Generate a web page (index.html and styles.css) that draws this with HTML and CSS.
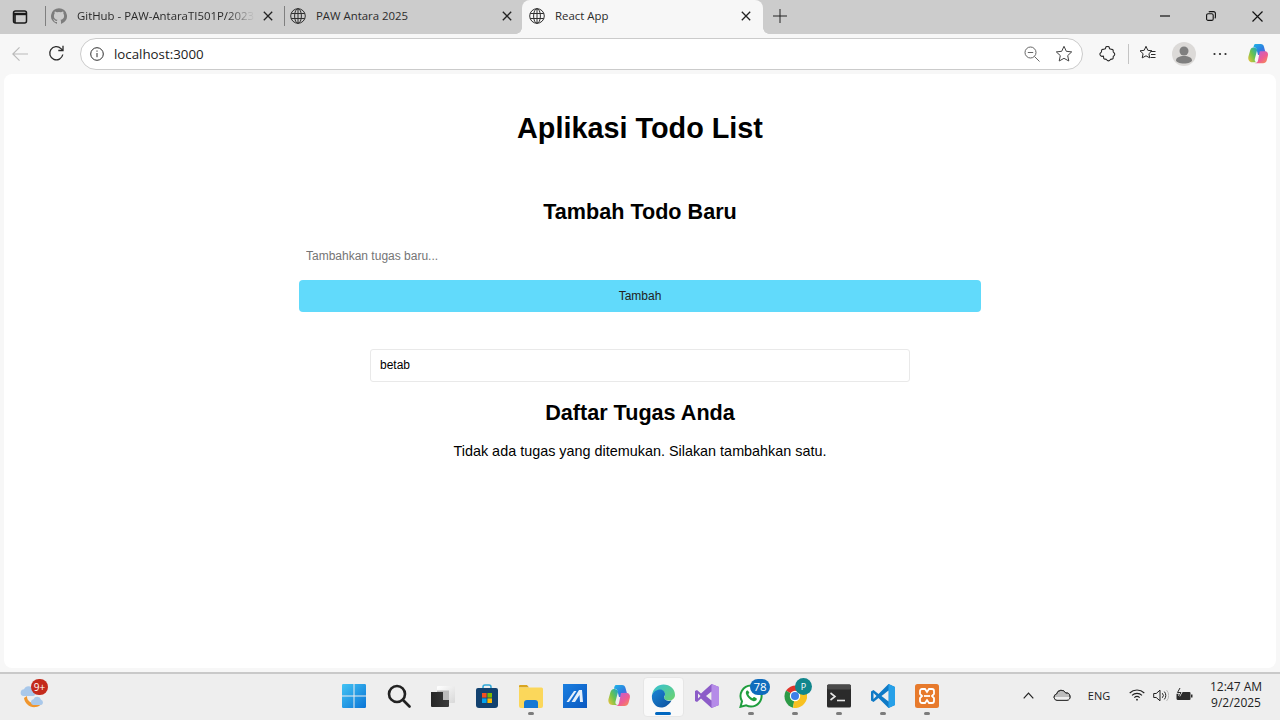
FILE: index.html
```html
<!DOCTYPE html>
<html lang="id">
<head>
<meta charset="utf-8">
<title>React App</title>
<link rel="stylesheet" href="styles.css">
</head>
<body>
<div class="window">
  <header class="tabstrip">
    <div class="strip-btn">
      <svg width="16" height="16" viewBox="0 0 16 16" fill="none" stroke="#1a1a1a" stroke-width="1.5"><rect x="1.5" y="2" width="13" height="12" rx="2"/><path d="M1.5 5h13" stroke-width="2.4"/><path d="M3 5v9" stroke-width="1.600"/></svg>
    </div>
    <div class="tab-sep"></div>
    <div class="tab tab-first">
      <svg class="favicon" width="16" height="16" viewBox="0 0 16 16" fill="#7d7d7d"><path d="M8 .2a8 8 0 0 0-2.5 15.6c.4.1.5-.2.5-.4v-1.4c-2.2.5-2.7-1-2.7-1-.4-.9-.9-1.200-.9-1.200-.7-.5.1-.5.1-.5.8.1 1.200.8 1.200.8.7 1.200 1.900.9 2.300.7.1-.5.300-.9.500-1.100-1.800-.2-3.600-.9-3.600-4 0-.9.300-1.600.8-2.100-.1-.2-.4-1 .1-2.100 0 0 .7-.2 2.200.8a7.600 7.600 0 0 1 4 0c1.500-1 2.200-.8 2.200-.8.5 1.100.2 1.900.1 2.100.5.6.8 1.300.8 2.100 0 3.100-1.900 3.800-3.700 4 .3.300.6.800.6 1.500v2.200c0 .2.100.5.500.4A8 8 0 0 0 8 .2z"/></svg>
      <span class="tab-title tab-fade">GitHub - PAW-AntaraTI501P/2023</span>
      <svg class="tab-x" width="10" height="10" viewBox="0 0 10 10" stroke="#222" stroke-width="1.300"><path d="M.8.8l8.400 8.400M9.200.8L.8 9.200"/></svg>
    </div>
    <div class="tab-sep tab-sep-near"></div>
    <div class="tab tab-second">
      <svg class="favicon" width="16" height="16" viewBox="0 0 16 16" fill="none" stroke="#303030" stroke-width="1"><circle cx="8" cy="8" r="7.300"/><ellipse cx="8" cy="8" rx="3.400" ry="7.300"/><path d="M8 .7v14.600M1.200 5.500h13.600M1.200 10.500h13.600"/></svg>
      <span class="tab-title">PAW Antara 2025</span>
      <svg class="tab-x" width="10" height="10" viewBox="0 0 10 10" stroke="#222" stroke-width="1.300"><path d="M.8.8l8.400 8.400M9.200.8L.8 9.200"/></svg>
    </div>
    <div class="tab tab-active">
      <svg class="favicon" width="16" height="16" viewBox="0 0 16 16" fill="none" stroke="#303030" stroke-width="1"><circle cx="8" cy="8" r="7.300"/><ellipse cx="8" cy="8" rx="3.400" ry="7.300"/><path d="M8 .7v14.600M1.200 5.500h13.600M1.200 10.500h13.600"/></svg>
      <span class="tab-title">React App</span>
      <svg class="tab-x" width="10" height="10" viewBox="0 0 10 10" stroke="#222" stroke-width="1.300"><path d="M.8.8l8.400 8.400M9.200.8L.8 9.200"/></svg>
    </div>
    <div class="new-tab">
      <svg width="14" height="14" viewBox="0 0 14 14" stroke="#222" stroke-width="1"><path d="M7 0v14M0 7h14"/></svg>
    </div>
    <div class="win-controls">
      <div class="win-btn"><svg width="10" height="10" viewBox="0 0 10 10" stroke="#111" stroke-width="1.200"><path d="M0 5h10"/></svg></div>
      <div class="win-btn"><svg width="10" height="10" viewBox="0 0 10 10" fill="none" stroke="#111" stroke-width="1.100"><rect x=".6" y="2.800" width="6.600" height="6.600" rx="1.500"/><path d="M2.800 1.200A1.500 1.500 0 0 1 4 .6h3.400a2 2 0 0 1 2 2V6a1.500 1.500 0 0 1-.6 1.200"/></svg></div>
      <div class="win-btn"><svg width="11" height="11" viewBox="0 0 11 11" stroke="#111" stroke-width="1.200"><path d="M.5.5l10 10M10.500.5l-10 10"/></svg></div>
    </div>
  </header>

  <nav class="toolbar">
    <div class="nav-btn nav-back">
      <svg width="16" height="16" viewBox="0 0 16 16" fill="none" stroke="#b9b9b9" stroke-width="1.100"><path d="M16 8H.8M7.500 1.300L.8 8l6.700 6.700"/></svg>
    </div>
    <div class="nav-btn nav-reload">
      <svg width="17" height="17" viewBox="0 0 17 17" fill="none" stroke="#2a2a2a" stroke-width="1.300"><path d="M14.800 9.500A6.600 6.600 0 1 1 13 3.600l1.700 1.700"/><path d="M15 .8v4.700h-4.700"/></svg>
    </div>
    <div class="address">
      <svg class="addr-info" width="14" height="14" viewBox="0 0 14 14" fill="none" stroke="#2e2e2e" stroke-width="1"><circle cx="7" cy="7" r="6.300"/><path d="M7 6v4.200M7 3.500v1.200"/></svg>
      <span class="addr-text">localhost:3000</span>
      <svg class="addr-zoom" width="16" height="16" viewBox="0 0 16 16" fill="none" stroke="#666" stroke-width="1"><circle cx="6.500" cy="6.500" r="5.500"/><path d="M3.800 6.500h5.400M10.500 10.500l5 5"/></svg>
      <svg class="addr-star" width="18" height="18" viewBox="0 0 18 18" fill="none" stroke="#444" stroke-width="1"><path d="M9 1.300l2.300 5 5.400.6-4 3.700 1.100 5.400L9 13.300 4.200 16l1.100-5.400-4-3.700 5.400-.6z" stroke-linejoin="round"/></svg>
    </div>
    <div class="tool-btn tool-ext">
      <svg width="17" height="17" viewBox="0 0 17 17" fill="none" stroke="#2a2a2a" stroke-width="1.100"><path d="M6.500 2.400a2 2 0 0 1 4 0c0 .4 1.600 1.100 2.400 1 1 0 1.400.6 1.300 1.500-.1.800-.1 1.300.5 1.600a2 2 0 0 1 0 3.500c-.6.300-.6.800-.5 1.600.1 1-.4 1.500-1.300 1.500-.8 0-1.400.1-1.700.7a2 2 0 0 1-3.500 0c-.3-.6-.9-.7-1.700-.7-1 0-1.500-.5-1.400-1.500.1-.8.100-1.300-.5-1.600A2 2 0 0 1 2 6.500c.6-.3.600-.8.500-1.600-.1-1 .4-1.500 1.400-1.500.8.100 2.600-.6 2.600-1z" stroke-linejoin="round"/></svg>
    </div>
    <div class="tool-sep"></div>
    <div class="tool-btn tool-fav">
      <svg width="18" height="17" viewBox="0 0 18 17" fill="none" stroke="#2a2a2a" stroke-width="1"><path d="M7 1.300l1.800 4 4.200.5-3.100 2.900.9 4.200L7 10.800l-3.800 2.100.9-4.200L1 5.800l4.200-.5z" stroke-linejoin="round"/><path d="M11.500 6.500h5M12 9.500h4.500M11.500 12.500h5"/></svg>
    </div>
    <div class="tool-btn tool-avatar">
      <svg width="24" height="24" viewBox="0 0 24 24"><circle cx="12" cy="12" r="12" fill="#dcdad8"/><circle cx="12" cy="9" r="4.500" fill="#7f7f7f"/><path d="M4 18.500c0-3 3.500-4.500 8-4.500s8 1.500 8 4.500c0 1.500-3.500 3-8 3s-8-1.500-8-3z" fill="#7f7f7f"/></svg>
    </div>
    <div class="tool-btn tool-more">
      <svg width="14" height="4" viewBox="0 0 14 4" fill="#2a2a2a"><circle cx="1.500" cy="2" r="1.100"/><circle cx="7" cy="2" r="1.100"/><circle cx="12.500" cy="2" r="1.100"/></svg>
    </div>
    <div class="tool-btn tool-copilot">
      <svg width="22" height="22" viewBox="0 0 24 24">
        <defs>
          <linearGradient id="cpA" x1="0" y1="0" x2="1" y2="1"><stop offset="0" stop-color="#1fb6e8"/><stop offset=".55" stop-color="#2e7ee0"/><stop offset="1" stop-color="#7a5ae0"/></linearGradient>
          <linearGradient id="cpB" x1="0" y1="1" x2="1" y2="0"><stop offset="0" stop-color="#f5c33b"/><stop offset=".5" stop-color="#6cc34c"/><stop offset="1" stop-color="#18a6c9"/></linearGradient>
          <linearGradient id="cpC" x1="0" y1="0" x2="1" y2="1"><stop offset="0" stop-color="#b55fe0"/><stop offset=".6" stop-color="#ef5d92"/><stop offset="1" stop-color="#f6954a"/></linearGradient>
        </defs>
        <path d="M9 1h6c2 0 3 1 3.500 3L21 13H12L10.500 7C10 5 8.500 4.500 7 5c.3-2.500 1-4 2-4z" fill="url(#cpA)"/>
        <path d="M7 5C5 5 4 6.500 3.500 8L1.500 15c-.7 3 1 6 4 6H11c-2 0-3-1.500-2.500-3.500L11 8c.3-1.800-2-3-4-3z" fill="url(#cpB)"/>
        <path d="M14 9h5.500c2.500 0 4 2 3.300 5l-1.300 5c-.6 2-2 3-4 3H8c2.500 0 3.500-1 4-3l2-10z" fill="url(#cpC)"/>
      </svg>
    </div>
  </nav>

  <main class="viewport">
    <h1 class="app-title">Aplikasi Todo List</h1>
    <section class="add-section">
      <h2 class="section-title">Tambah Todo Baru</h2>
      <form class="todo-form">
        <input class="todo-input" type="text" placeholder="Tambahkan tugas baru...">
        <button class="todo-btn" type="button">Tambah</button>
      </form>
    </section>
    <input class="search-input" type="text" value="betab">
    <h2 class="section-title list-title">Daftar Tugas Anda</h2>
    <p class="empty-text">Tidak ada tugas yang ditemukan. Silakan tambahkan satu.</p>
  </main>

  <footer class="taskbar">
    <div class="task-left">
      <div class="weather">
        <svg width="30" height="30" viewBox="0 0 30 30">
          <path d="M6 17c1 6 6 10 12 9 3-.5 5-2 6-4-5 2-11 1-14-3-1-1.500-1-3-1-4z" fill="#f0962e"/>
          <path d="M5 15a3.500 3.500 0 0 1 1-6.800 5 5 0 0 1 9.500 1 3 3 0 0 1 0 5.800z" fill="#a9c8ea"/>
          <path d="M15 24a3 3 0 0 1 .5-5.800 4 4 0 0 1 7.500 .6 2.700 2.700 0 0 1 0 5.200z" fill="#a9c8ea"/>
        </svg>
        <span class="weather-badge">9+</span>
      </div>
    </div>

    <div class="task-center">
      <div class="task-item task-win">
        <svg width="24" height="24" viewBox="0 0 24 24">
          <defs><linearGradient id="winG" x1="0" y1="0" x2="1" y2="1"><stop offset="0" stop-color="#43c4f4"/><stop offset="1" stop-color="#0a74d6"/></linearGradient></defs>
          <path d="M0 1.200A1.200 1.200 0 0 1 1.200 0h10.300v11.500H0zM12.500 0h10.300A1.200 1.200 0 0 1 24 1.200v10.300H12.500zM0 12.500h11.500V24H1.200A1.200 1.200 0 0 1 0 22.800zM12.500 12.500H24v10.300a1.200 1.200 0 0 1-1.200 1.200H12.500z" fill="url(#winG)"/>
        </svg>
      </div>
      <div class="task-item">
        <svg width="24" height="24" viewBox="0 0 24 24" fill="none" stroke="#222" stroke-width="2.600"><circle cx="10" cy="10" r="8"/><path d="M16 16l6.500 6.500" stroke-linecap="round"/></svg>
      </div>
      <div class="task-item">
        <svg width="24" height="24" viewBox="0 0 24 24">
          <defs><linearGradient id="tvA" x1="0" y1="0" x2="1" y2="1"><stop offset="0" stop-color="#fff"/><stop offset="1" stop-color="#d8d8d8"/></linearGradient><linearGradient id="tvB" x1="0" y1="0" x2="1" y2="0"><stop offset="0" stop-color="#262626"/><stop offset="1" stop-color="#3c3c3c"/></linearGradient></defs>
          <rect x="6" y="2" width="18" height="17" rx="1" fill="url(#tvA)"/>
          <rect x="6" y="6.500" width="12" height="11" fill="#bcbcbc"/>
          <path d="M0 8h12v8h6v6a1 1 0 0 1-1 1H1a1 1 0 0 1-1-1z" fill="url(#tvB)"/>
        </svg>
      </div>
      <div class="task-item">
        <svg width="24" height="24" viewBox="0 0 24 24">
          <path d="M8 5V3a2 2 0 0 1 2-2h4a2 2 0 0 1 2 2v2" fill="none" stroke="#2fa8d8" stroke-width="1.500"/>
          <path d="M1 6a2 2 0 0 1 2-2h18a2 2 0 0 1 2 2v15a3 3 0 0 1-3 3H4a3 3 0 0 1-3-3z" fill="#12416f"/>
          <rect x="7" y="9" width="4.600" height="4.600" fill="#f25022"/><rect x="12.400" y="9" width="4.600" height="4.600" fill="#7fba00"/><rect x="7" y="14.400" width="4.600" height="4.600" fill="#00a4ef"/><rect x="12.400" y="14.400" width="4.600" height="4.600" fill="#ffb900"/>
        </svg>
      </div>
      <div class="task-item is-running">
        <svg width="24" height="24" viewBox="0 0 24 24">
          <path d="M0 2a1 1 0 0 1 1-1h7l2 2.500h-10z" fill="#d9a520"/>
          <path d="M0 3.500h22.500a1.500 1.500 0 0 1 1.500 1.500v17a2 2 0 0 1-2 2H2a2 2 0 0 1-2-2z" fill="#fbd75b"/>
          <path d="M5 19a3 3 0 0 1 3-3h8a3 3 0 0 1 3 3v5H5z" fill="#1578d4"/>
        </svg>
      </div>
      <div class="task-item">
        <svg width="24" height="24" viewBox="0 0 24 24">
          <defs><linearGradient id="mcG" x1="0" y1="0" x2="1" y2="1"><stop offset="0" stop-color="#1a7fe0"/><stop offset="1" stop-color="#0a58c0"/></linearGradient></defs>
          <rect width="24" height="24" fill="url(#mcG)"/>
          <path d="M3.500 18L11 7h2.500L6 18zM8.500 18L16 6h3l1 12h-3l-.5-7L12 18z" fill="#e4effb"/>
        </svg>
      </div>
      <div class="task-item">
        <svg width="24" height="24" viewBox="0 0 24 24">
          <path d="M9 1h6c2 0 3 1 3.500 3L21 13H12L10.500 7C10 5 8.500 4.500 7 5c.3-2.500 1-4 2-4z" fill="url(#cpA)"/>
          <path d="M7 5C5 5 4 6.500 3.500 8L1.500 15c-.7 3 1 6 4 6H11c-2 0-3-1.500-2.500-3.500L11 8c.3-1.800-2-3-4-3z" fill="url(#cpB)"/>
          <path d="M14 9h5.500c2.500 0 4 2 3.300 5l-1.300 5c-.6 2-2 3-4 3H8c2.500 0 3.500-1 4-3l2-10z" fill="url(#cpC)"/>
        </svg>
      </div>
      <div class="task-item is-active">
        <svg width="24" height="24" viewBox="0 0 24 24">
          <defs><linearGradient id="edA" x1="0" y1="0" x2="1" y2="1"><stop offset="0" stop-color="#35c1d8"/><stop offset="1" stop-color="#6ed36a"/></linearGradient><linearGradient id="edB" x1="0" y1="0" x2="1" y2="1"><stop offset="0" stop-color="#1b86d6"/><stop offset="1" stop-color="#0b4f9c"/></linearGradient></defs>
          <path d="M1 11C2 4.500 7 .5 12.500.5 19 .5 24 5 24 11c0 3.500-3 5.500-6 5.500-3 0-5-1-5-2.500 0-1 1-1.500 1-3.500 0-3-3-5-6-4.500C5 6.500 2 8.500 1 11z" fill="url(#edA)"/>
          <path d="M1 11c1-3 4-5 7-5.500 3-.5 6 1.500 6 4.500 0 2-1 2.500-1 3.500 0 1.800 3 4.500 7.500 3-.5 1-3.500 6-9 7C5 24.500 0 18 1 11z" fill="url(#edB)"/>
        </svg>
      </div>
      <div class="task-item">
        <svg width="24" height="24" viewBox="0 0 24 24">
          <path d="M16.500 0L24 3v18l-7.500 3L6 14.500 2 18l-2-1V7l2-1 4 3.500z" fill="#8c5cc8"/>
          <path d="M16.500 0L24 3v18l-7.500 3z" fill="#b58be8"/>
          <path d="M16.500 7.500L11 12l5.500 4.500z" fill="#eee"/>
          <path d="M3 9.500v5L5.500 12z" fill="#eee"/>
        </svg>
      </div>
      <div class="task-item is-running">
        <svg class="wa-icon" width="24" height="24" viewBox="0 0 24 24">
          <path d="M12 1.500a10.500 10.500 0 0 0-9 15.800L1.500 22.800l5.700-1.500A10.500 10.500 0 1 0 12 1.500z" fill="#fff" stroke="#1f9e3e" stroke-width="2"/>
          <path d="M8 6.500c-1 .5-1.500 2-1 3.500 1 3 4 6 7 7 1.500.5 3 0 3.500-1 .4-.8.300-1.500 0-1.700l-2.300-1.200c-.4-.2-.7 0-1 .4l-.6.7c-2-.7-3.500-2.200-4.300-4.200l.7-.7c.3-.3.4-.6.200-1L9 6.800c-.2-.4-.6-.5-1-.3z" fill="#1f9e3e"/>
        </svg>
        <span class="task-badge">78</span>
      </div>
      <div class="task-item is-running">
        <svg width="24" height="24" viewBox="0 0 24 24">
          <path d="M12 12L3 6.500A12 12 0 0 1 23 7H12z" fill="#e0352b"/>
          <path d="M12 12L3 6.500A12 12 0 0 0 10 23.800z" fill="#2d9a46"/>
          <path d="M12 12L10 23.800A12 12 0 0 0 23 7H12z" fill="#f8c120"/>
          <circle cx="12" cy="12" r="5.200" fill="#fff"/><circle cx="12" cy="12" r="4" fill="#3f7fe8"/>
        </svg>
        <span class="profile-badge">P</span>
      </div>
      <div class="task-item is-running">
        <svg width="24" height="24" viewBox="0 0 24 24">
          <rect width="24" height="23" y=".5" rx="1.500" fill="#2b2b2b"/>
          <rect width="24" height="5" y=".5" rx="1.500" fill="#4a4a4a"/>
          <path d="M3.500 9l4.500 3.500L3.500 16" fill="none" stroke="#e6e6e6" stroke-width="1.600"/>
          <path d="M10 16.500h8" stroke="#e6e6e6" stroke-width="1.600"/>
        </svg>
      </div>
      <div class="task-item is-running">
        <svg width="24" height="24" viewBox="0 0 24 24">
          <path d="M17.500 0L24 3v18l-6.500 3L7.500 14 2.500 18 0 16.500v-9L2.500 6l5 4z" fill="#0f7ac6"/>
          <path d="M17.500 0L24 3v18l-6.500 3z" fill="#27a0e8"/>
          <path d="M17.500 6.500L10.500 12l7 5.500z" fill="#eee"/>
          <path d="M2.500 9v6L5.500 12z" fill="#eee"/>
        </svg>
      </div>
      <div class="task-item is-running">
        <svg width="24" height="24" viewBox="0 0 24 24">
          <rect width="24" height="24" rx="2.500" fill="#e77a2c"/>
          <path d="M7 5h3l2 3 2-3h3a2 2 0 0 1 2 2v3l-2 2 2 2v3a2 2 0 0 1-2 2h-3l-2-3-2 3H7a2 2 0 0 1-2-2v-3l2-2-2-2V7a2 2 0 0 1 2-2z" fill="none" stroke="#fff" stroke-width="1.800"/>
          <path d="M9 12h6" stroke="#fff" stroke-width="1.800"/>
        </svg>
      </div>
    </div>

    <div class="task-right">
      <svg class="tray-caret" width="11" height="7" viewBox="0 0 11 7" fill="none" stroke="#222" stroke-width="1.200"><path d="M.7 6.300L5.500 1.200l4.800 5.100"/></svg>
      <svg class="tray-cloud" width="18" height="12" viewBox="0 0 18 12"><path d="M4 11.300a3.200 3.200 0 0 1-.5-6.300 5 5 0 0 1 9.300-1A3.700 3.700 0 0 1 14 11.300z" fill="#bdbdbd" stroke="#333" stroke-width="1"/><path d="M1.500 8h15v3H1.500z" fill="#eee"/><path d="M4 11.300a3.200 3.200 0 0 1-.5-6.300 5 5 0 0 1 9.300-1A3.700 3.700 0 0 1 14 11.300z" fill="none" stroke="#333" stroke-width="1"/></svg>
      <span class="tray-lang">ENG</span>
      <svg class="tray-wifi" width="16" height="12" viewBox="0 0 16 12" fill="none" stroke="#222" stroke-width="1.100"><path d="M.7 4a10.500 10.500 0 0 1 14.600 0M3 6.400a7.200 7.200 0 0 1 10 0M5.300 8.700a3.900 3.900 0 0 1 5.400 0"/><circle cx="8" cy="10.700" r=".9" fill="#222" stroke="none"/></svg>
      <svg class="tray-vol" width="16" height="13" viewBox="0 0 16 13" fill="none" stroke="#222" stroke-width="1"><path d="M.7 4.500h2.500L7 1.200v10.600L3.200 8.500H.7z"/><path d="M9.300 4.200a3.300 3.300 0 0 1 0 4.600M11.300 2.600a5.800 5.800 0 0 1 0 7.800"/><path d="M13.500 1a8 8 0 0 1 0 11" stroke="#bbb"/></svg>
      <svg class="tray-batt" width="18" height="14" viewBox="0 0 18 14"><path d="M3 4h11.500a1 1 0 0 1 1 1v6a1 1 0 0 1-1 1H3a1.500 1.500 0 0 1-1.500-1.500v-5A1.500 1.500 0 0 1 3 4z" fill="#2a2a2a"/><rect x="16" y="6.500" width="1.500" height="3" fill="#2a2a2a"/><path d="M5 0L2.500 4.500H6L4 8" fill="none" stroke="#eee" stroke-width="2.400"/><path d="M5 0L2.500 4.500H6L4 8" fill="none" stroke="#2a2a2a" stroke-width="1"/></svg>
      <div class="tray-clock"><span>12:47 AM</span><span>9/2/2025</span></div>
    </div>
  </footer>
</div>
</body>
</html>
```

FILE: styles.css
```css
* { box-sizing: border-box; }
html, body { margin: 0; height: 100%; overflow: hidden; }
body { font-family: "Liberation Sans", Arial, sans-serif; color: #000; }

.window { width: 1280px; height: 720px; display: flex; flex-direction: column; background: #f7f7f7; }

/* Tab strip */
.tabstrip { height: 34px; flex: none; background: #cccccc; display: flex; align-items: stretch; font-family: "Open Sans", "Noto Sans", sans-serif; font-size: 11.400px; color: #2b2b2b; }
.strip-btn { width: 45px; display: flex; align-items: center; justify-content: center; padding-right: 5px; }
.tab-sep { width: 1px; height: 20px; margin-top: 6px; background: #7f7f7f; flex: none; }
.tab { display: flex; align-items: center; flex: none; }
.tab-first { width: 238px; padding: 0 11px 2px 5px; }
.tab-second { width: 237px; padding: 0 10px 2px 5px; }
.favicon { flex: none; }
.tab-title { flex: 1; margin: 0 0 2px 10px; white-space: nowrap; overflow: hidden; }
.tab-fade { -webkit-mask-image: linear-gradient(to right, #000 84%, transparent 100%); mask-image: linear-gradient(to right, #000 84%, transparent 100%); }
.tab-x { flex: none; margin-left: 8px; }
.tab-active { position: relative; width: 241px; height: 34px; background: #f7f7f7; border-radius: 8px 8px 0 0; padding: 0 12px 2px 7px; }
.tab-active::before, .tab-active::after { content: ""; position: absolute; bottom: 0; width: 6px; height: 6px; }
.tab-active::before { left: -6px; background: radial-gradient(circle at 0 0, transparent 5.500px, #f7f7f7 6px); }
.tab-active::after { right: -6px; background: radial-gradient(circle at 100% 0, transparent 5.500px, #f7f7f7 6px); }
.new-tab { width: 34px; display: flex; align-items: center; justify-content: center; padding-bottom: 2px; }
.win-controls { margin-left: auto; display: flex; }
.win-btn { width: 46px; display: flex; align-items: center; justify-content: center; padding-bottom: 2px; }

/* Toolbar */
.toolbar { height: 40px; flex: none; display: flex; align-items: center; background: #f7f7f7; padding-bottom: 1px; }
.nav-btn { width: 37px; display: flex; justify-content: center; }
.nav-back { margin-left: 1px; }
.address { width: 1003px; height: 32px; margin-left: 5px; background: #fff; border: 1px solid #cbcbcb; border-radius: 16px; display: flex; align-items: center; padding: 0 9px; }
.addr-info { flex: none; }
.addr-text { margin-left: 10px; font-family: "Open Sans", "Noto Sans", sans-serif; font-size: 13.300px; color: #222; flex: 1; }
.addr-zoom { flex: none; margin-right: 15px; }
.addr-star { flex: none; }
.tool-btn { display: flex; justify-content: center; align-items: center; flex: none; }
.tool-ext { width: 32px; margin-left: 8px; padding-top: 1px; }
.tool-sep { width: 1px; height: 20px; background: #c4c4c4; margin-left: 5px; }
.tool-fav { width: 38px; }
.tool-avatar { width: 34px; }
.tool-more { width: 38px; }
.tool-copilot { width: 38px; }

/* Page */
.viewport { flex: 1; margin: 0 4px 4px; background: #fff; border-radius: 8px; text-align: center; display: flex; flex-direction: column; align-items: center; min-height: 0; }
.app-title { margin: 37px 0 0; font-size: 28.800px; line-height: 35px; font-weight: 700; }
.add-section { width: 682px; margin-top: 53px; }
.section-title { margin: 0; font-size: 21.600px; line-height: 26px; font-weight: 700; }
.todo-form { display: flex; flex-direction: column; gap: 8px; margin-top: 15px; }
.todo-input { height: 32px; border: 0; outline: 0; background: transparent; padding: 0 7px; font: 12px "Liberation Sans", Arial, sans-serif; }
.todo-input::placeholder { color: #757575; opacity: 1; }
.todo-btn { height: 32px; border: 0; border-radius: 4px; background: #61dafb; font: 12px "Liberation Sans", Arial, sans-serif; color: #222; padding: 0 0 1px; }
.search-input { width: 540px; height: 33px; margin-top: 37px; border: 1px solid #e9e9e9; border-radius: 3px; outline: 0; padding: 0 9px 2px; font: 12px "Liberation Sans", Arial, sans-serif; color: #000; }
.list-title { margin-top: 18px; }
.empty-text { margin: 16px 0 0; font-size: 14.400px; line-height: 18px; }

/* Taskbar */
.taskbar { height: 48px; flex: none; background: #eeeeee; border-top: 2px solid #c9c9c9; display: grid; grid-template-columns: 1fr auto 1fr; align-items: center; }
.task-left { display: flex; padding-left: 18px; padding-bottom: 3px; }
.weather { position: relative; width: 30px; height: 30px; }
.weather-badge { position: absolute; left: 13px; top: -2px; width: 17px; height: 16px; border-radius: 8px; background: #c42b1c; color: #fff; font: 10px/16px "Open Sans", sans-serif; text-align: center; }
.task-center { display: flex; padding-left: 2px; }
.task-item { position: relative; width: 44px; height: 46px; display: flex; align-items: center; justify-content: center; padding-bottom: 2px; }
.task-win { padding-right: 2px; }
.is-running::after { content: ""; position: absolute; left: 19px; bottom: 5px; width: 6px; height: 3px; border-radius: 2px; background: #7c7c7c; }
.is-active::before { content: ""; position: absolute; left: 2px; top: 3px; width: 39px; height: 38px; background: #f9f9f9; border: 1px solid #e6e6e6; border-radius: 4px; }
.is-active svg { position: relative; }
.is-active::after { content: ""; position: absolute; left: 14px; bottom: 5px; width: 16px; height: 3px; border-radius: 2px; background: #0067c0; }
.task-badge { position: absolute; left: 21px; top: 5px; width: 20px; height: 16px; border-radius: 8px; background: #0f6cbd; color: #fff; font: 11.500px/16px "Open Sans", sans-serif; text-align: center; }
.profile-badge { position: absolute; left: 22px; top: 4px; width: 17px; height: 17px; border-radius: 50%; background: #11868c; color: #fff; font: 9px/17px "Open Sans", sans-serif; text-align: center; }

.task-right { display: flex; align-items: center; justify-content: flex-end; padding-bottom: 4px; font-family: "Open Sans", "Noto Sans", sans-serif; color: #222; }
.tray-caret { flex: none; margin-right: 19px; }
.tray-cloud { flex: none; margin-right: 16px; }
.tray-lang { font-size: 11px; margin-right: 18px; width: 24px; text-align: center; }
.tray-wifi { flex: none; margin-right: 8px; }
.tray-vol { flex: none; margin-right: 6px; }
.tray-batt { flex: none; margin-right: 9px; }
.tray-clock { width: 68px; display: flex; flex-direction: column; align-items: center; font-size: 12px; line-height: 16px; margin-right: 10px; }
```
